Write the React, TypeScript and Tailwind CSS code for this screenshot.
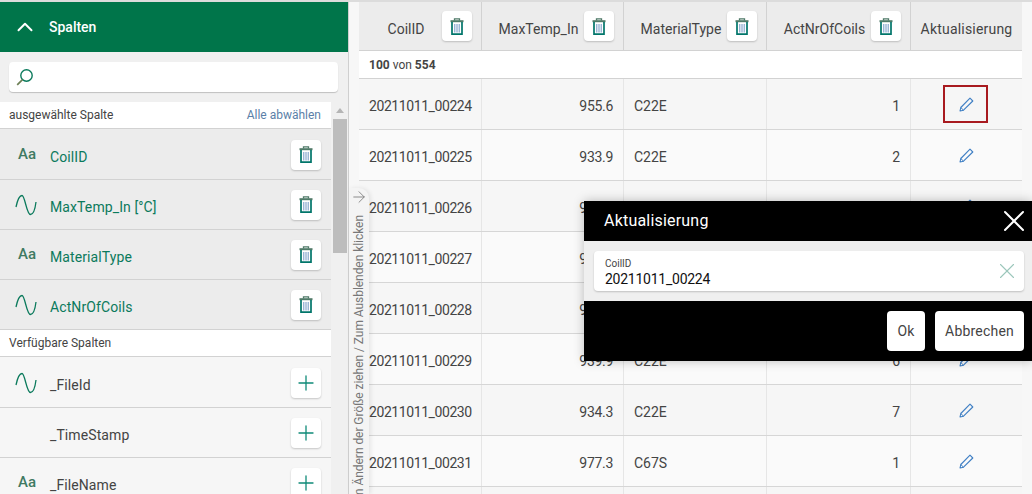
import React from 'react';
import { ArrowRight, ChevronUp, Plus, X } from 'lucide-react';

const FONT = "font-['Roboto',sans-serif]";

const selected = [
  { name: 'CoilID', kind: 'text' },
  { name: 'MaxTemp_In [°C]', kind: 'wave' },
  { name: 'MaterialType', kind: 'text' },
  { name: 'ActNrOfCoils', kind: 'wave' },
];

const available = [
  { name: '_FileId', kind: 'wave' },
  { name: '_TimeStamp', kind: 'none' },
  { name: '_FileName', kind: 'text' },
];

const rows = [
  { id: '20211011_00224', temp: '955.6', type: 'C22E', nr: '1' },
  { id: '20211011_00225', temp: '933.9', type: 'C22E', nr: '2' },
  { id: '20211011_00226', temp: '941.2', type: 'C22E', nr: '3' },
  { id: '20211011_00227', temp: '948.5', type: 'C22E', nr: '4' },
  { id: '20211011_00228', temp: '952.0', type: 'C22E', nr: '5' },
  { id: '20211011_00229', temp: '939.9', type: 'C22E', nr: '6' },
  { id: '20211011_00230', temp: '934.3', type: 'C22E', nr: '7' },
  { id: '20211011_00231', temp: '977.3', type: 'C67S', nr: '1' },
  { id: '20211011_00232', temp: '961.4', type: 'C67S', nr: '2' },
];

const columns = [
  { name: 'CoilID', w: 'w-[123px]' },
  { name: 'MaxTemp_In', w: 'w-[142px]' },
  { name: 'MaterialType', w: 'w-[143px]' },
  { name: 'ActNrOfCoils', w: 'w-[144px]' },
];

const TrashIcon = () => (
  <svg width="14" height="17" viewBox="0 0 14 17" fill="none">
    <path d="M0.500 2.200h13v2h-13z" fill="#4f7a68" />
    <path d="M4.500 2.500V0.800h5v1.700" stroke="#4f7a68" strokeWidth="1.300" />
    <path d="M2 4v12.200h10V4" stroke="#00756a" strokeWidth="1.700" />
    <path d="M4.800 6v8.500M7 6v8.500M9.200 6v8.500" stroke="#6f95c4" strokeWidth="1" />
  </svg>
);

const WaveIcon = () => (
  <svg width="22" height="22" viewBox="0 0 22 22" fill="none">
    <path d="M1 13C2.500 6 4.500 1.500 7 1.500C10 1.500 11.500 20.500 15.500 20.500C18 20.500 20 16 21 8" stroke="#0b7a5c" strokeWidth="1.300" />
  </svg>
);

const SearchIcon = () => (
  <svg width="18" height="18" viewBox="0 0 18 18" fill="none">
    <circle cx="10.500" cy="7.500" r="5.700" stroke="#0b7a5c" strokeWidth="1.400" />
    <path d="M6.500 11.700L1.200 16.800" stroke="#6d7f55" strokeWidth="1.700" />
  </svg>
);

const PencilIcon = () => (
  <svg width="15" height="15" viewBox="0 0 15 15" fill="none">
    <path d="M11 1.200L13.800 4L4.500 13.200L1 14L1.800 10.500Z" stroke="#3f7fc4" strokeWidth="1.100" strokeLinejoin="round" />
    <path d="M1.800 10.500L4.500 13.200" stroke="#3f7fc4" strokeWidth="1" />
  </svg>
);

const SquareButton = ({ children }: { children: React.ReactNode }) => (
  <div className="flex h-[30px] w-[30px] shrink-0 items-center justify-center rounded bg-white shadow-[0_1px_2px_rgba(0,0,0,0.2)]">
    {children}
  </div>
);

const KindIcon = ({ kind }: { kind: string }) => {
  if (kind === 'text') {
    return <span className="pl-[3px] text-[15px] leading-none font-medium text-[#3f7a62]">Aa</span>;
  }
  if (kind === 'wave') {
    return <WaveIcon />;
  }
  return null;
};

const ColumnRow = ({ name, kind, active, first }: { name: string; kind: string; active: boolean; first: boolean }) => (
  <div className={`flex items-center border-b border-[#d2d2d2] pr-[10px] pl-[15px] ${first ? 'h-[51px] pt-px' : 'h-[50px]'} ${active ? 'bg-[#ececec]' : 'bg-[#f6f6f6]'}`}>
    <div className="flex w-[35px] shrink-0 items-center">
      <KindIcon kind={kind} />
    </div>
    <span className={`mt-[5px] flex-1 text-[14px] tracking-[0.1px] ${active ? 'text-[#0b7a5c]' : 'text-[#444]'}`}>{name}</span>
    <SquareButton>
      {active ? <TrashIcon /> : <Plus size={24} strokeWidth={1.300} className="text-[#0f8a78]" />}
    </SquareButton>
  </div>
);

const Sidebar = () => (
  <aside className="flex h-full w-[349px] shrink-0 flex-col overflow-hidden border-r border-[#cfcfcf] bg-[#f0f0f0]">
    <div className="flex h-[50px] shrink-0 items-center gap-[11px] bg-[#00754a] pl-[12px] text-white">
      <ChevronUp size={26} strokeWidth={1.800} />
      <span className="text-[14px] font-medium">Spalten</span>
    </div>
    <div className="py-[10px] pr-[10px] pl-[9px]">
      <div className="flex h-[30px] items-center rounded bg-white pl-[7px] shadow-[0_1px_1px_rgba(0,0,0,0.2)]">
        <SearchIcon />
      </div>
    </div>
    <div className="flex min-h-0 flex-1">
      <div className="w-[331px] shrink-0">
        <div className="flex h-[27px] items-center justify-between border-b border-[#d2d2d2] bg-white pr-[10px] pl-[9px] text-[12px]">
          <span className="text-[#444]">ausgewählte Spalte</span>
          <span className="text-[#5b7fa8]">Alle abwählen</span>
        </div>
        {selected.map((c, i) => (
          <ColumnRow key={c.name} name={c.name} kind={c.kind} active first={i === 0} />
        ))}
        <div className="flex h-[27px] items-center border-b border-[#d2d2d2] bg-white pl-[9px] text-[12px] text-[#444]">
          Verfügbare Spalten
        </div>
        {available.map((c, i) => (
          <ColumnRow key={c.name} name={c.name} kind={c.kind} active={false} first={i === 0} />
        ))}
      </div>
      <div className="flex w-[16px] shrink-0 flex-col items-center pl-[2px]">
        <div className="mt-[6px] mb-[6px] h-0 w-0 border-x-[4px] border-b-[5px] border-x-transparent border-b-[#b5b5b5]" />
        <div className="h-[134px] w-[14px] bg-[#bdbdbd]" />
      </div>
    </div>
  </aside>
);

const Table = () => (
  <main className="flex h-full min-w-0 flex-1 pl-[10px]">
    <div className="w-[663px] shrink-0 text-[14px] text-[#444]">
      <div className="flex h-[49px] border-b border-[#d2d2d2] bg-[#ececec]">
        {columns.map((c) => (
          <div key={c.name} className={`flex items-center border-r border-[#d2d2d2] pr-[9px] pl-[11px] ${c.w}`}>
            <span className="mt-[7px] flex-1 text-center">{c.name}</span>
            <SquareButton>
              <TrashIcon />
            </SquareButton>
          </div>
        ))}
        <div className="flex flex-1 items-center justify-center pt-[7px] tracking-[0.2px]">Aktualisierung</div>
      </div>
      <div className="flex h-[28px] items-center gap-[3px] border-b border-[#d2d2d2] bg-white pl-[10px] text-[12px]">
        <b className="font-bold">100</b> von <b className="font-bold">554</b>
      </div>
      {rows.map((r, i) => (
        <div key={r.id} className={`flex h-[51px] border-b border-[#d6d6d6] ${i % 2 === 0 ? 'bg-[#f6f6f6]' : 'bg-[#fafafa]'}`}>
          <div className="flex w-[123px] items-center border-r border-[#e6e6e6] pt-[5px] pl-[10px] tracking-[-0.42px]">{r.id}</div>
          <div className="flex w-[142px] items-center justify-end border-r border-[#e6e6e6] pt-[5px] pr-[10px] tracking-[-0.3px]">{r.temp}</div>
          <div className="flex w-[143px] items-center border-r border-[#e6e6e6] pt-[5px] pl-[10px]">{r.type}</div>
          <div className="flex w-[144px] items-center justify-end border-r border-[#e6e6e6] pt-[5px] pr-[10px]">{r.nr}</div>
          <div className="flex flex-1 items-center justify-center">
            <div className={`mr-[2px] flex h-[38px] w-[45px] items-center justify-center pl-[2px] ${i === 0 ? 'border-2 border-[#a81a1f]' : ''}`}>
              <PencilIcon />
            </div>
          </div>
        </div>
      ))}
    </div>
  </main>
);

const ResizeHandle = () => (
  <div className="absolute top-[188px] bottom-0 left-[349px] flex w-[20px] flex-col items-center overflow-hidden rounded-tr-[10px] bg-[#f4f4f4] text-[#777] shadow-[2px_0_4px_rgba(0,0,0,0.08)]">
    <ArrowRight size={18} strokeWidth={1.100} className="shrink-0" />
    <span className="mt-[9px] rotate-180 text-[12px] leading-[16px] tracking-[-0.05px] whitespace-nowrap [writing-mode:vertical-rl]">
      Zum Ändern der Größe ziehen / Zum Ausblenden klicken
    </span>
  </div>
);

const Dialog = () => (
  <div className="absolute top-[201px] left-[584px] flex w-[448px] flex-col shadow-[0_0_10px_rgba(0,0,0,0.25)]">
    <div className="flex h-[40px] items-center justify-between bg-black pl-[20px] text-white">
      <span className="text-[16px] tracking-[0.2px]">Aktualisierung</span>
      <X size={36} strokeWidth={1.300} />
    </div>
    <div className="bg-[#efefef] py-[10px] pr-[8px] pl-[10px]">
      <div className="flex h-[40px] items-center justify-between rounded bg-white pr-[4px] pl-[11px] shadow-[0_1px_2px_rgba(0,0,0,0.2)]">
        <div className="flex flex-col pt-[3px]">
          <span className="text-[10px] leading-[12px] text-[#444]">CoilID</span>
          <span className="text-[14px] leading-[18px] tracking-[-0.25px] text-[#111]">20211011_00224</span>
        </div>
        <X size={26} strokeWidth={1} className="text-[#9cc7bb]" />
      </div>
    </div>
    <div className="flex h-[60px] items-center justify-end gap-[10px] bg-black pr-[8px] text-[14px] tracking-[0.2px] text-[#444]">
      <div className="flex h-[40px] w-[38px] items-center justify-center rounded bg-white">Ok</div>
      <div className="flex h-[40px] w-[89px] items-center justify-center rounded bg-white">Abbrechen</div>
    </div>
  </div>
);

export default function App() {
  return (
    <div className={`relative flex h-[494px] w-[1032px] flex-col overflow-hidden bg-[#f7f7f7] ${FONT}`}>
      <div className="h-[2px] shrink-0 bg-[#dcdcdc]" />
      <div className="flex min-h-0 flex-1">
        <Sidebar />
        <Table />
      </div>
      <ResizeHandle />
      <Dialog />
    </div>
  );
}
